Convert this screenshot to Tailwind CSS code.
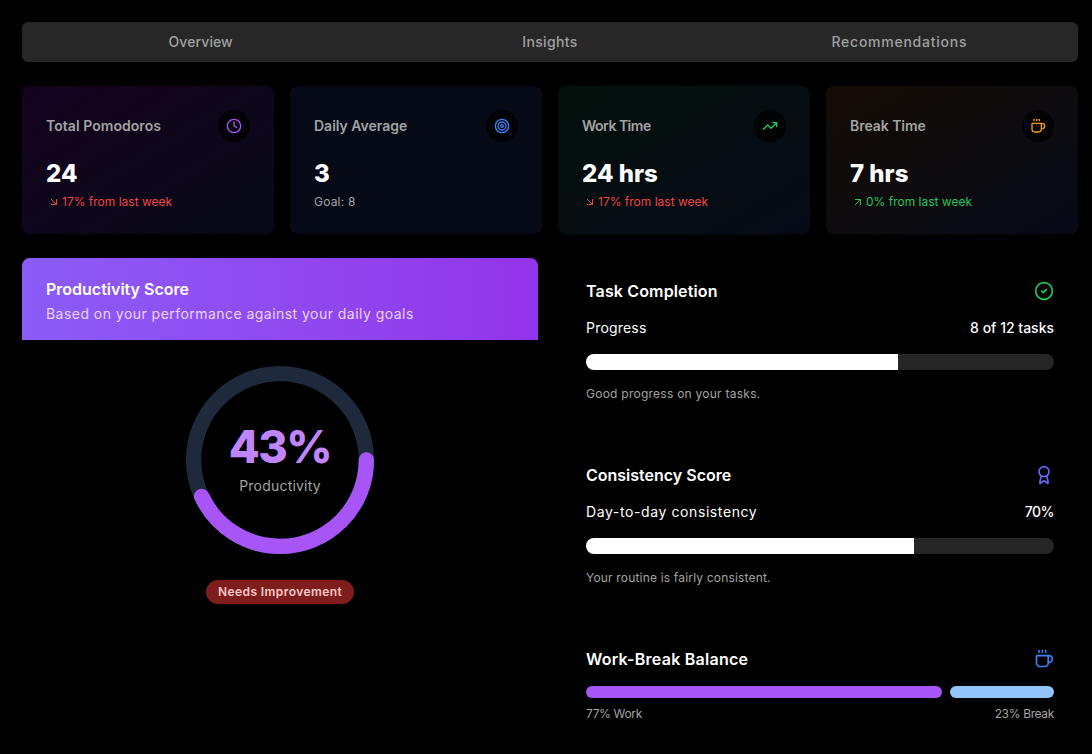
<!DOCTYPE html>
<html lang="en">
<head>
  <meta charset="UTF-8" />
  <title>Pomodoro Stats</title>
  <script src="https://cdn.jsdelivr.net/npm/@tailwindcss/browser@4"></script>
</head>
<body class="bg-black text-white h-[754px] overflow-hidden [font-family:Inter,sans-serif]">
  <div class="pl-[22px] pr-[14px] pt-[22px]">

    <!-- Tabs -->
    <div class="grid grid-cols-3 h-10 rounded-md bg-[#272727] mb-6 px-1 text-sm font-medium text-[#a1a1a1]">
      <div class="flex items-center justify-center tracking-[0.1px]">Overview</div>
      <div class="flex items-center justify-center tracking-[0.35px]">Insights</div>
      <div class="flex items-center justify-center tracking-[0.75px]">Recommendations</div>
    </div>

    <!-- Stat cards -->
    <div class="grid grid-cols-4 gap-4 mb-6">
      <div class="h-[148px] rounded-lg p-6 bg-gradient-to-br from-[#14021f] to-[#060916]">
        <div class="flex items-center justify-between h-8 mb-4">
          <span class="text-sm font-semibold text-[#a3a3a3] tracking-[0.05px]">Total Pomodoros</span>
          <span class="w-8 h-8 rounded-full bg-black/70 flex items-center justify-center">
            <svg class="w-4 h-4 text-[#a855f7]" viewBox="0 0 24 24" fill="none" stroke="currentColor" stroke-width="2" stroke-linecap="round" stroke-linejoin="round"><circle cx="12" cy="12" r="10"/><path d="M12 6v6l4 2"/></svg>
          </span>
        </div>
        <div class="text-2xl font-extrabold leading-8">24</div>
        <div class="flex items-center gap-0.5 text-xs text-[#ef4444] mt-1">
          <svg class="w-3 h-3 ml-0.5" viewBox="0 0 24 24" fill="none" stroke="currentColor" stroke-width="2" stroke-linecap="round" stroke-linejoin="round"><path d="M7 7l10 10"/><path d="M17 7v10H7"/></svg>
          <span>17% from last week</span>
        </div>
      </div>

      <div class="h-[148px] rounded-lg p-6 bg-[#060a17]">
        <div class="flex items-center justify-between h-8 mb-4">
          <span class="text-sm font-semibold text-[#a3a3a3]">Daily Average</span>
          <span class="w-8 h-8 rounded-full bg-black/70 flex items-center justify-center">
            <svg class="w-4 h-4 text-[#3b82f6]" viewBox="0 0 24 24" fill="none" stroke="currentColor" stroke-width="2" stroke-linecap="round" stroke-linejoin="round"><circle cx="12" cy="12" r="10"/><circle cx="12" cy="12" r="6"/><circle cx="12" cy="12" r="2"/></svg>
          </span>
        </div>
        <div class="text-2xl font-extrabold leading-8">3</div>
        <div class="text-xs leading-4 text-[#a3a3a3] mt-1 tracking-[0.2px]">Goal: 8</div>
      </div>

      <div class="h-[148px] rounded-lg p-6 bg-gradient-to-br from-[#03100a] to-[#060a17]">
        <div class="flex items-center justify-between h-8 mb-4">
          <span class="text-sm font-semibold text-[#a3a3a3] tracking-[-0.5px]">Work Time</span>
          <span class="w-8 h-8 rounded-full bg-black/70 flex items-center justify-center">
            <svg class="w-4 h-4 text-[#22c55e]" viewBox="0 0 24 24" fill="none" stroke="currentColor" stroke-width="2" stroke-linecap="round" stroke-linejoin="round"><path d="M22 7l-8.5 8.5-5-5L2 17"/><path d="M16 7h6v6"/></svg>
          </span>
        </div>
        <div class="text-2xl font-extrabold leading-8">24 hrs</div>
        <div class="flex items-center gap-0.5 text-xs text-[#ef4444] mt-1">
          <svg class="w-3 h-3 ml-0.5" viewBox="0 0 24 24" fill="none" stroke="currentColor" stroke-width="2" stroke-linecap="round" stroke-linejoin="round"><path d="M7 7l10 10"/><path d="M17 7v10H7"/></svg>
          <span>17% from last week</span>
        </div>
      </div>

      <div class="h-[148px] rounded-lg p-6 bg-gradient-to-br from-[#140b04] to-[#060a17]">
        <div class="flex items-center justify-between h-8 mb-4">
          <span class="text-sm font-semibold text-[#a3a3a3] tracking-[-0.05px]">Break Time</span>
          <span class="w-8 h-8 rounded-full bg-black/70 flex items-center justify-center">
            <svg class="w-4 h-4 text-[#f59e0b]" viewBox="0 0 24 24" fill="none" stroke="currentColor" stroke-width="2" stroke-linecap="round" stroke-linejoin="round"><path d="M10 2v2"/><path d="M14 2v2"/><path d="M16 8a1 1 0 0 1 1 1v8a4 4 0 0 1-4 4H7a4 4 0 0 1-4-4V9a1 1 0 0 1 1-1h14a4 4 0 1 1 0 8h-1"/><path d="M6 2v2"/></svg>
          </span>
        </div>
        <div class="text-2xl font-extrabold leading-8">7 hrs</div>
        <div class="flex items-center gap-0.5 text-xs text-[#22c55e] mt-1">
          <svg class="w-3 h-3 ml-0.5" viewBox="0 0 24 24" fill="none" stroke="currentColor" stroke-width="2" stroke-linecap="round" stroke-linejoin="round"><path d="M7 17L17 7"/><path d="M7 7h10v10"/></svg>
          <span>0% from last week</span>
        </div>
      </div>
    </div>

    <div class="grid grid-cols-2 gap-6">
      <!-- Productivity score -->
      <div class="flex flex-col items-center">
        <div class="w-full h-[82px] rounded-t-lg px-6 pt-[19px] bg-gradient-to-r from-[#8b5cf6] to-[#9333ea]">
          <div class="font-semibold leading-6">Productivity Score</div>
          <div class="text-sm leading-5 mt-[3px] text-[#e9d5ff] tracking-[0.46px]">Based on your performance against your daily goals</div>
        </div>
        <div class="relative w-48 h-48 mt-6">
          <svg class="w-48 h-48" viewBox="0 0 100 100" fill="none">
            <circle cx="50" cy="50" r="45" stroke="#1e293b" stroke-width="8"/>
            <circle cx="50" cy="50" r="45" stroke="#a855f7" stroke-width="8" stroke-linecap="round" stroke-dasharray="121.6 282.7"/>
          </svg>
          <div class="absolute inset-0 flex flex-col items-center justify-center">
            <span class="text-[45px] font-extrabold leading-12 text-[#c084fc] mt-[-2px] tracking-[-1.5px]">43%</span>
            <span class="text-sm leading-5 mt-[5px] text-[#a3a3a3] tracking-[0.2px]">Productivity</span>
          </div>
        </div>
        <div class="mt-6 h-6 px-3 rounded-full bg-[#7f1d1d] flex items-center text-xs font-semibold text-[#fecaca] tracking-[0.42px]">Needs Improvement</div>
      </div>

      <!-- Metrics -->
      <div class="px-6 pt-[21px]">
        <div class="mb-[61px]">
          <div class="flex items-center justify-between h-6 mb-[15px]">
            <span class="font-semibold tracking-[0.15px]">Task Completion</span>
            <svg class="w-5 h-5 text-[#22c55e]" viewBox="0 0 24 24" fill="none" stroke="currentColor" stroke-width="2" stroke-linecap="round" stroke-linejoin="round"><circle cx="12" cy="12" r="10"/><path d="M9 12l2 2 4-4"/></svg>
          </div>
          <div class="flex items-center justify-between h-5 mb-4 text-sm">
            <span class="tracking-[0.2px]">Progress</span>
            <span class="font-medium">8 of 12 tasks</span>
          </div>
          <div class="h-4 rounded-full bg-[#262626] overflow-hidden mb-4">
            <div class="h-full bg-white" style="width: 66.67%"></div>
          </div>
          <div class="text-xs leading-4 text-[#a3a3a3] tracking-[0.25px]">Good progress on your tasks.</div>
        </div>

        <div class="mb-[61px]">
          <div class="flex items-center justify-between h-6 mb-[15px]">
            <span class="font-semibold">Consistency Score</span>
            <svg class="w-5 h-5 text-[#6366f1]" viewBox="0 0 24 24" fill="none" stroke="currentColor" stroke-width="2" stroke-linecap="round" stroke-linejoin="round"><path d="M15.477 12.89l1.515 8.526a.5.5 0 0 1-.81.47l-3.58-2.687a1 1 0 0 0-1.197 0l-3.586 2.686a.5.5 0 0 1-.81-.469l1.514-8.526"/><circle cx="12" cy="8" r="6"/></svg>
          </div>
          <div class="flex items-center justify-between h-5 mb-4 text-sm">
            <span class="tracking-[0.6px]">Day-to-day consistency</span>
            <span class="font-medium tracking-[-0.5px]">70%</span>
          </div>
          <div class="h-4 rounded-full bg-[#262626] overflow-hidden mb-4">
            <div class="h-full bg-white" style="width: 70%"></div>
          </div>
          <div class="text-xs leading-4 text-[#a3a3a3] tracking-[0.18px]">Your routine is fairly consistent.</div>
        </div>

        <div>
          <div class="flex items-center justify-between h-6 mb-[15px]">
            <span class="font-semibold tracking-[0.25px]">Work-Break Balance</span>
            <svg class="w-5 h-5 text-[#3b82f6]" viewBox="0 0 24 24" fill="none" stroke="currentColor" stroke-width="2" stroke-linecap="round" stroke-linejoin="round"><path d="M10 2v2"/><path d="M14 2v2"/><path d="M16 8a1 1 0 0 1 1 1v8a4 4 0 0 1-4 4H7a4 4 0 0 1-4-4V9a1 1 0 0 1 1-1h14a4 4 0 1 1 0 8h-1"/><path d="M6 2v2"/></svg>
          </div>
          <div class="flex gap-2 h-3">
            <div class="h-full rounded-full bg-[#a855f7]" style="width: 356px"></div>
            <div class="h-full flex-1 rounded-full bg-[#93c5fd]"></div>
          </div>
          <div class="flex justify-between mt-2 text-xs leading-4 text-[#a3a3a3] tracking-[-0.35px]">
            <span>77% Work</span>
            <span>23% Break</span>
          </div>
        </div>
      </div>
    </div>
  </div>
</body>
</html>
